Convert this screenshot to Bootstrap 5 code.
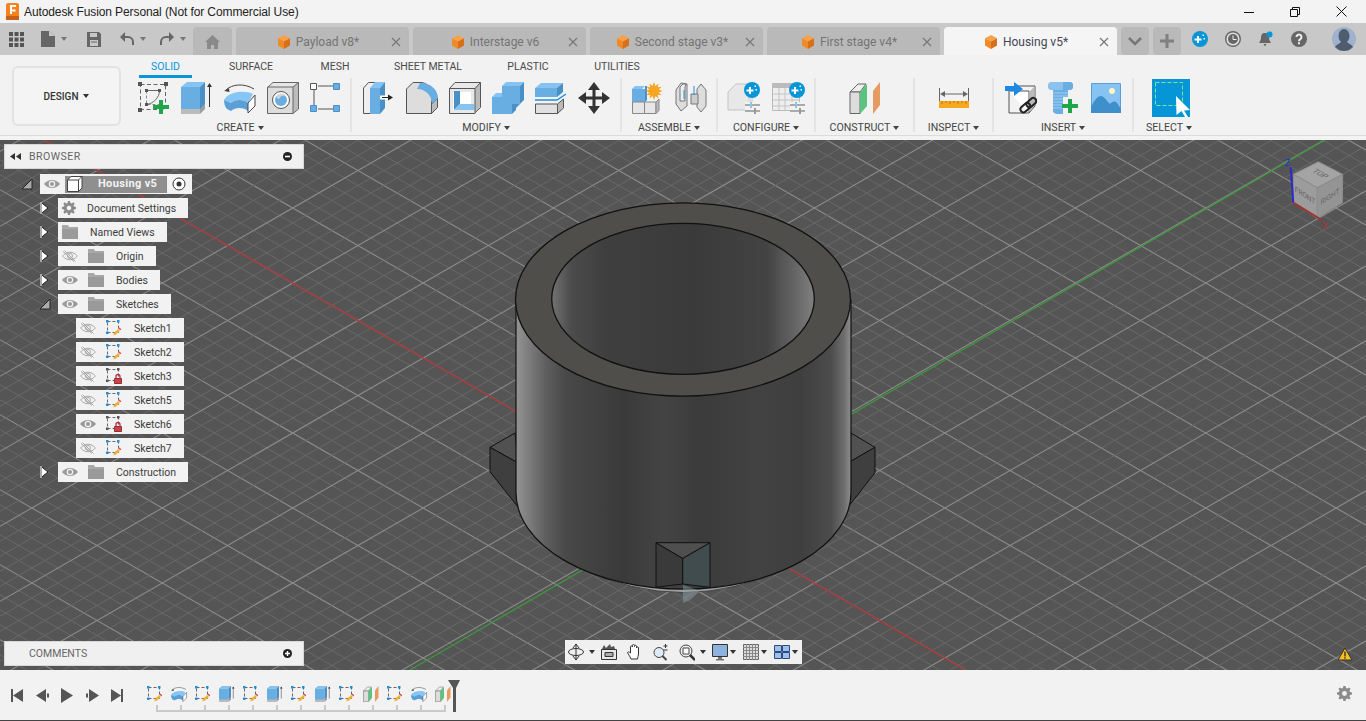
<!DOCTYPE html>
<html lang="en">
<head>
    <meta charset="UTF-8">
    <meta name="viewport" content="width=device-width, initial-scale=1.0">
    <title>Autodesk Fusion Personal</title>
    <link rel="stylesheet" href="https://cdn.jsdelivr.net/npm/bootstrap@5.3.0/dist/css/bootstrap.min.css">
    <style>
        html, body { height: 100%; overflow: hidden; }
        body { background: #f3f3f3; font-family: Roboto, "Liberation Sans", sans-serif; color: #444; }
        svg { display: block; flex: none; }

        .title-bar { height: 23px; background: #f3f3f3; font-size: 12px; color: #222; padding-left: 6px; }
        .title-name { margin-left: 5px; font-family: "Liberation Sans", sans-serif; letter-spacing: -.1px; }
        .win-btns { margin-left: auto; margin-right: 2px; }
        .win-btn { width: 46px; justify-content: center; }

        .doc-bar { height: 32px; background: #c8c8c8; padding-left: 9px; }
        .qa-wrap { width: 175px; color: #777; }
        .qa-file { margin-left: 17px; }
        .qa-save { margin-left: 20px; }
        .qa-undo { margin-left: 19px; }
        .qa-redo { margin-left: 14px; }
        .qa-wrap .tri { margin-left: 6px; }
        .doc-tabs { gap: 4px; height: 28px; margin-top: 4px; margin-left: 9px; align-self: flex-start; }
        .doc-tab { width: 173px; height: 28px; background: #b9b9b9; border-radius: 4px 4px 0 0; font-size: 12px; color: #747474; padding: 1px 8px 0; }
        .doc-tab.on { background: #f5f5f5; color: #454555; }
        .tab-main { flex: 1 1 auto; gap: 4px; justify-content: center; }
        .home-tab, .bar-btn { height: 28px; background: #b9b9b9; border-radius: 4px 4px 0 0; }
        .home-tab { width: 39px; }
        .bar-btn { width: 28px; border-radius: 4px; }
        .bar-icons { gap: 17px; margin-left: 11px; }

        .ribbon { height: 81px; background: #f2f2f2; border-bottom: 1px solid #dcdcdc; margin-bottom: 4px; }
        .design-btn { width: 109px; height: 60px; margin: 11px 9px 0 12px; border: 2px solid #e2e2e2; border-radius: 6px; background: #f4f4f4; font-size: 10px; font-weight: 500; color: #333; gap: 5px; padding: 0; }
        .rb-tabs { height: 23px; margin-left: 9px; }
        .rb-tabs .nav-item { text-align: center; }
        .rb-tabs .nav-item:nth-child(1) { width: 53px; }
        .rb-tabs .nav-item:nth-child(2) { width: 118px; }
        .rb-tabs .nav-item:nth-child(3) { width: 50px; }
        .rb-tabs .nav-item:nth-child(4) { width: 136px; }
        .rb-tabs .nav-item:nth-child(5) { width: 64px; }
        .rb-tabs .nav-item:nth-child(6) { width: 114px; }
        .rb-tabs .nav-link { padding: 6px 0 0; height: 23px; font-size: 10.5px; color: #4a4a4a; border-bottom: 3px solid transparent; line-height: 12px; white-space: nowrap; }
        .rb-tabs .nav-link.active { color: #0696d7; border-bottom-color: #0696d7; }
        .rb-groups { height: 58px; }
        .rb-grp { border-right: 2px solid #e4e4e4; height: 54px; }
        .rb-grp:last-child { border-right: 0; }
        .rb-icons { gap: 11px; height: 38px; padding-top: 2px; flex: none; }
        .rb-label { font-size: 10.6px; color: #444; gap: 3px; margin-top: 5px; height: 13px; flex: none; }
        .g-create { width: 222px; }
        .g-modify { width: 270px; }
        .g-assemble { width: 96px; }
        .g-config { width: 98px; }
        .g-construct { width: 99px; }
        .g-inspect { width: 79px; }
        .g-insert { width: 140px; }
        .g-select { width: 70px; }
        .sel-ico { margin-left: 4px; }
        .tri { display: inline-block; width: 0; height: 0; border-left: 3px solid transparent; border-right: 3px solid transparent; border-top: 4px solid currentColor; flex: none; }

        .viewport { flex: 1 1 auto; background: #555; overflow: hidden; min-height: 0; }
        .scene { position: absolute; left: 0; top: 0; }
        .side-col { position: absolute; left: 4px; top: 4px; bottom: 4px; width: 300px; }
        .pane-head { height: 25px; background: #f0f0f0; border: 1px solid #d8d8d8; font-size: 10.5px; color: #666; padding: 0 11px 0 5px; }
        .pane-title { margin-left: 8px; letter-spacing: .5px; }
        .pane-plain { margin-left: 19px; }
        .tree { margin: 5px 0 0; padding: 0; list-style: none; font-size: 10.5px; color: #3c3c3c; }
        .tree li { display: flex; align-items: center; height: 20px; margin-bottom: 4px; padding-left: 35px; }
        .tree li.root { padding-left: 17px; }
        .tree li.sub { padding-left: 72px; }
        .exp { width: 14px; margin-right: 5px; }
        .tr-row { height: 20px; background: #f2f2f2; padding: 0 12px 0 4px; gap: 10px; white-space: nowrap; }
        .tr-name { margin-left: 2px; padding-top: 1px; }
        .tr-name.wide { margin-left: 1px; }
        .root .tr-row { padding: 0 6px 0 4px; gap: 5px; }
        .root-box { background: #8f8f8f; color: #f4f4f4; font-size: 11px; font-weight: 700; letter-spacing: .35px; height: 17px; width: 102px; padding-left: 2px; }
        .root-box span { margin-left: 15px; padding-top: 1px; }

        .nav-tools { position: absolute; left: 565px; bottom: 6px; height: 24px; width: 237px; background: #f0f0f0; padding-left: 3px; color: #333; }
        .nt-item { gap: 5px; margin-right: 6px; }
        .nt-plain { margin-right: 10px; }
        .nt-tight { gap: 2px; margin-right: 7px; }
        .warn-mark { position: absolute; right: 13px; bottom: 9px; }

        .timeline { height: 51px; background: #f2f2f2; border-bottom: 1px solid #444; padding-left: 11px; position: relative; }
        .tl-btns { gap: 12.5px; margin-right: 24px; }
        .tl-items { gap: 8px; height: 16px; }
        .tl-stack { margin-top: 7px; }
        .tl-ruler { margin-top: 3px; margin-left: 9px; }
        .playhead { position: absolute; left: 448px; top: 10px; }
        .tl-gear { position: absolute; right: 14px; top: 16px; }
    </style>
</head>
<body class="d-flex flex-column">

    <!-- shared icons -->
    <svg width="0" height="0" class="position-absolute">
        <defs>
            <symbol id="i-cube" viewBox="0 0 16 16">
                <path fill="#f7a24a" d="M8 1l6 3.2L8 7.4 2 4.2z"/>
                <path fill="#f08a24" d="M2 4.2l6 3.2V15l-6-3.4z"/>
                <path fill="#d8701a" d="M14 4.2L8 7.4V15l6-3.4z"/>
            </symbol>
            <symbol id="i-x" viewBox="0 0 10 10">
                <path stroke="#777" stroke-width="1.200" d="M1 1l8 8M9 1l-8 8"/>
            </symbol>
            <symbol id="i-eye" viewBox="0 0 16 12">
                <path fill="#9a9a9a" d="M0 6c4-5.4 12-5.4 16 0-4 5.400-12 5.400-16 0z"/>
                <circle cx="8" cy="6" r="3.300" fill="#f2f2f2"/>
                <circle cx="8" cy="6" r="2" fill="#9a9a9a"/>
            </symbol>
            <symbol id="i-eye-off" viewBox="0 0 16 12">
                <path fill="none" stroke="#a8a8a8" d="M.6 6c4-5 10.800-5 14.800 0-4 5-10.800 5-14.800 0z"/>
                <circle cx="8" cy="6" r="2.500" fill="none" stroke="#a8a8a8"/>
                <path stroke="#a8a8a8" d="M2.500 .5l11 11M1 1.500l11 10"/>
            </symbol>
            <symbol id="i-folder" viewBox="0 0 16 14">
                <path fill="#a8a8a8" d="M0 0h6l1 2h9v2H0z"/>
                <path fill="#9a9a9a" d="M0 4h16v10H0z"/>
            </symbol>
            <symbol id="i-gear" viewBox="0 0 14 14">
                <path fill="#8b8b8b" d="M6 0h2l.4 1.900 1.300.5L11.300 1.300l1.400 1.400-1.100 1.600.5 1.300 1.900.4v2l-1.900.4-.5 1.300 1.100 1.600-1.400 1.400-1.600-1.100-1.300.5L8 14H6l-.4-1.900-1.300-.5-1.600 1.100-1.400-1.400 1.100-1.600-.5-1.300L0 8V6l1.900-.4.500-1.300L1.300 2.700l1.400-1.400 1.600 1.100 1.300-.5z"/>
                <circle cx="7" cy="7" r="2.300" fill="#f2f2f2"/>
            </symbol>
            <symbol id="i-sk-edit" viewBox="0 0 16 16">
                <path fill="none" stroke="#666" stroke-dasharray="3 2" d="M1.500 1.500h11v11h-11z"/>
                <path fill="#1e90e0" d="M0 0h2.500v2.500H0zM11 0h2.500v2.500H11zM0 11.500h2.500V14H0z"/>
                <path fill="#f2b233" d="M8 13l4-4 1.800 1.800-4 4-2.500.8z"/>
                <path fill="#ee4444" d="M12.500 8.500l1-1 1.800 1.800-1 1z"/>
            </symbol>
            <symbol id="i-sk-lock" viewBox="0 0 16 16">
                <path fill="none" stroke="#666" stroke-dasharray="3 2" d="M1.500 1.500h11v11h-11z"/>
                <path fill="#555" d="M0 0h2.500v2.500H0zM11 0h2.500v2.500H11zM0 11.500h2.500V14H0z"/>
                <path fill="none" stroke="#b4343c" stroke-width="1.300" d="M10 10V8.500a2 2 0 0 1 4 0V10"/>
                <path fill="#c9444c" stroke="#9c2b33" d="M8.500 10.500h7v5h-7z"/>
            </symbol>
            <symbol id="i-new-sketch" viewBox="0 0 32 32">
                <path fill="none" stroke="#666" stroke-dasharray="4 2.500" d="M2.500 2.500h25v25h-25z"/>
                <path fill="#555" d="M0 0h4v4H0zM26 0h4v4h-4zM0 26h4v4H0z"/>
                <path fill="none" stroke="#888" stroke-dasharray="3 2" d="M8.500 8.500v14h14"/>
                <path fill="none" stroke="#666" d="M8.500 22.500c7-1 13-7 13-14h-13"/>
                <path fill="#555" d="M7 7h3v3H7zM20 7h3v3h-3zM7 21h3v3H7z"/>
                <path fill="#1fa64a" d="M21 18h4v5h6v4h-6v5h-4v-5h-6v-4h6z"/>
            </symbol>
            <symbol id="i-extrude" viewBox="0 0 32 32">
                <path fill="#bbb" d="M0 26h19v6H0z"/>
                <path fill="#9e9e9e" d="M19 26l5-4v5l-5 5z"/>
                <path fill="#86c3f2" d="M0 5l6-5h18l-5 5z"/>
                <path fill="#68aee3" d="M0 5h19v22H0z"/>
                <path fill="#4a8fc6" d="M19 5l5-5v22l-5 5z"/>
                <path stroke="#333" d="M28.500 3v22"/>
                <path fill="#333" d="M28.500 1l2.500 4h-5z"/>
            </symbol>
            <symbol id="i-revolve" viewBox="0 0 32 32">
                <path fill="none" stroke="#444" d="M2 8C8 2 20 1 30 7"/>
                <path fill="#444" d="M0 9l5-3 .5 4z"/>
                <path fill="#86c6f6" d="M0 18C5 9 21 8 29 12l-5 9C20 17 11 17 7 21z"/>
                <path fill="#5a9fd6" d="M0 18l7 3c4-4 13-4 17 0v8c-4-4-13-4-17 0l-4-2C1 25 0 21 0 18z"/>
                <path fill="#fff" stroke="#444" d="M24 21l7-8v11l-7 7z"/>
            </symbol>
            <symbol id="i-hole" viewBox="0 0 32 32">
                <path fill="#e6e6e6" d="M1 5l5-4h25l-5 4z"/>
                <path fill="#ddd" d="M1 5h25v26H1z"/>
                <path fill="#bbb" d="M26 5l5-4v26l-5 4z"/>
                <path fill="none" stroke="#666" d="M1 5l5-4.500h25.500V27l-5.500 4.500H.5V5h25.500v26.500M26 5l5.500-4.500"/>
                <circle cx="14" cy="18" r="8.500" fill="#fff" stroke="#555"/>
                <circle cx="14" cy="18" r="6" fill="#68aee3"/>
                <path fill="#d4d4d4" d="M10 13a6 6 0 0 1 9 1c-3-1-6 0-7 3-2 0-3-2-2-4z"/>
            </symbol>
            <symbol id="i-form" viewBox="0 0 32 32">
                <path stroke="#555" d="M4 8v16M8 4h16M8 27h16" fill="none"/>
                <path fill="#fff" stroke="#555" d="M.5 1.500h6v6h-6z"/>
                <path fill="#68aee3" stroke="#4a8fc6" d="M23.500 1.500h6v6h-6zM.5 23.500h6v6h-6zM23.500 23.500h6v6h-6z"/>
            </symbol>
            <symbol id="i-press" viewBox="0 0 32 32">
                <path fill="#eee" stroke="#555" d="M.5 31.500V6l5-5.500h6V31.500z"/>
                <path fill="#86c3f2" d="M7 6l5-6h10l-5 6z"/>
                <path fill="#68aee3" d="M7 6h10v26H7z"/>
                <path fill="#4a8fc6" d="M17 6l5-6v26l-5 6z"/>
                <path fill="#fff" d="M17 13.500h8v4h-8z"/>
                <path stroke="#222" d="M19 15.500h7"/>
                <path fill="#222" d="M30 15.500l-5 3v-6z"/>
            </symbol>
            <symbol id="i-fillet" viewBox="0 0 32 32">
                <path fill="#ddd" stroke="#555" d="M.5 31.500V7L7 .5h8C22 .5 29 9 25.500 21L25.500 31.500z"/>
                <path fill="#bbb" stroke="#555" d="M25.500 31.500v-9l6-6.500v9.500z"/>
                <path fill="#68aee3" d="M14 1c9-1 18 6 18 15l-6 6c0-8-6-15-15-15z"/>
            </symbol>
            <symbol id="i-shell" viewBox="0 0 32 32">
                <path fill="#e8e8e8" stroke="#555" d="M.5 6.500L6 .5h25.500v25l-6 6H.5z"/>
                <path fill="#bbb" d="M26 6l5-5v24l-5 6z"/>
                <path fill="#fff" d="M4 10h18v18H4z"/>
                <path fill="none" stroke="#555" d="M.5 6.500h25.500v25M26 6.500L31.500 .5"/>
                <path fill="#4a8fc6" d="M5 9h6v13l-6 6z"/>
                <path fill="#86c3f2" d="M11 22h14v6H5z"/>
            </symbol>
            <symbol id="i-combine" viewBox="0 0 32 32">
                <path fill="#86c3f2" d="M10 4l4-4h18l-4 4zM0 15l4-4h8l-2 4z"/>
                <path fill="#68aee3" d="M10 4h18v18H20v10H0V15h10z"/>
                <path fill="#4a8fc6" d="M28 4l4-4v18l-4 4zM20 22h8l-4 4-0 2-4 4z"/>
            </symbol>
            <symbol id="i-split" viewBox="0 0 32 32">
                <path fill="#86c3f2" d="M0 6l6-5h22l-6 5z"/>
                <path fill="#68aee3" d="M0 6h22v9H0z"/>
                <path fill="#4a8fc6" d="M22 6l6-5v9l-6 5z"/>
                <path fill="none" stroke="#1e90e0" stroke-width="1.500" d="M0 18h22l9-6"/>
                <path fill="#e0e0e0" stroke="#555" d="M.5 22h22v9.500H.5z"/>
                <path fill="#bbb" stroke="#555" d="M22.500 22l6-5v9l-6 5.500z"/>
            </symbol>
            <symbol id="i-move" viewBox="0 0 32 32">
                <path fill="#333" d="M16 0l6 8h-4.500v6.500H24V10l8 6-8 6v-4.500h-6.500V24H22l-6 8-6-8h4.500v-6.500H8V22l-8-6 8-6v4.500h6.500V8H10z"/>
            </symbol>
            <symbol id="i-assemble" viewBox="0 0 32 32">
                <path fill="#86c3f2" d="M0 7l3-3h10l-3 3z"/>
                <path fill="#68aee3" d="M0 7h13v13H0z"/>
                <path fill="#4a8fc6" d="M13 4h2v14l-2 2z"/>
                <path fill="#e6e6e6" stroke="#888" d="M.5 20h12v11.500H.5zM12.500 20h11.500v11.500H12.500z"/>
                <path fill="#bbb" stroke="#888" d="M24 20l3-3v11.500L24 31.500z"/>
                <path fill="#f6a623" d="M22 0l1.500 4 3-2.500-.8 3.800 4-.5-3 2.700 3.800 1.500-3.800 1.500 3 2.700-4-.5.800 3.800-3-2.500L22 18l-1.500-4-3 2.500.8-3.800-4 .5 3-2.700-3.800-1.500 3.800-1.500-3-2.700 4 .5-.8-3.800 3 2.500z"/>
            </symbol>
            <symbol id="i-joint" viewBox="0 0 32 32">
                <path fill="#ddd" stroke="#777" d="M1 8l5-7 6 1v22l-6 5-5-7z"/>
                <path fill="#eee" stroke="#777" d="M5 5l3-3h3l-1 3v14H5z"/>
                <path fill="#ddd" stroke="#777" d="M31 8l-5-6-4 5v18l4 5 5-6z"/>
                <path fill="#ccc" stroke="#777" d="M16 12h7v10h-7z"/>
                <path stroke="#1e90e0" d="M19 4v9M9 8v9"/>
            </symbol>
            <symbol id="i-spark" viewBox="0 0 16 16">
                <circle cx="8" cy="8" r="8" fill="#0696d7"/>
                <path fill="#fff" d="M5 5h2v2.500h2.500v2H7V12H5V9.500H2.500v-2H5z"/>
                <path fill="#fff" d="M10.500 3.500h1.500V5h-1.500zM11.500 7h1.500v1.500h-1.500z"/>
            </symbol>
            <symbol id="i-config" viewBox="0 0 34 32">
                <path fill="#e8e8e8" stroke="#c4c4c4" d="M1 10l8-8h16v20l-4 6H1z"/>
                <path fill="#ddd" d="M21 10l5-8v20l-5 6z"/>
                <use href="#i-spark" x="17" y="0" width="16" height="16"/>
                <path fill="#f2f2f2" d="M18 20h16v12H18z"/>
                <path stroke="#aaa" stroke-width="2" d="M18 23h15M18 29h15"/>
                <path stroke="#8fc4ea" stroke-width="2" d="M24 20v6"/>
                <path stroke="#999" stroke-width="2" d="M28 26v6"/>
            </symbol>
            <symbol id="i-config2" viewBox="0 0 34 32">
                <path fill="#eee" stroke="#bbb" d="M.5 1.500h27v27H.5z"/>
                <path fill="#bbb" d="M0 1h28v5H0z"/>
                <path stroke="#c4c4c4" fill="none" d="M1 12h26M1 18h26M1 24h26M7 6v22M13 6v22M20 6v22"/>
                <use href="#i-spark" x="17" y="0" width="16" height="16"/>
                <path fill="#f2f2f2" d="M18 20h16v12H18z"/>
                <path stroke="#aaa" stroke-width="2" d="M18 23h15M18 29h15"/>
                <path stroke="#8fc4ea" stroke-width="2" d="M24 20v6"/>
                <path stroke="#999" stroke-width="2" d="M28 26v6"/>
            </symbol>
            <symbol id="i-construct" viewBox="0 0 32 32">
                <path fill="#eee" stroke="#666" d="M1 10l8-8h8L11 10z"/>
                <path fill="#ddd" stroke="#666" d="M1 10h10v21.500H1z"/>
                <path fill="#5cc27f" d="M11 10l7-8v22l-7 8z"/>
                <path fill="#e59a62" d="M24 9l7-9v23l-7 9z"/>
            </symbol>
            <symbol id="i-inspect" viewBox="0 0 30 22">
                <path fill="none" stroke="#666" d="M.5 1v15M29.500 1v15M3 7h24"/>
                <path fill="#666" d="M1 7l5-3v6zM29 7l-5-3v6z"/>
                <path fill="#f6a91f" d="M0 14h30v7H0z"/>
                <path stroke="#b97a0a" d="M3 14v3M7 14v2M11 14v3M15 14v2M19 14v3M23 14v2M27 14v3"/>
            </symbol>
            <symbol id="i-derive" viewBox="0 0 32 32">
                <path fill="#f2f2f2" stroke="#555" d="M4 9l6-5h20v20l-6 7H4z"/>
                <path fill="#fff" stroke="#555" d="M4 9h20v22"/>
                <path fill="#bbb" d="M24.500 9.500l5-5v19l-5 6z"/>
                <path fill="#1e88e5" d="M0 4h9V0l9 7-9 7V9H0z"/>
                <g fill="none" stroke="#222" stroke-width="2">
                    <rect x="15" y="23" width="11" height="6" rx="3" transform="rotate(-42 20 26)"/>
                    <rect x="21" y="18" width="11" height="6" rx="3" transform="rotate(-42 26 21)"/>
                </g>
            </symbol>
            <symbol id="i-bolt" viewBox="0 0 32 32">
                <path fill="#8cc2ee" d="M0 2l2-2h21l2 2v4l-2 2H2L0 6z"/>
                <path fill="#6aaee3" d="M15 0h8l2 2v4l-2 2h-8z"/>
                <path fill="#6aaee3" d="M5 8h15v22l-3 2H8l-3-2z"/>
                <path stroke="#a6d0f0" d="M5 11h15M5 14h15M5 17h15M5 20h15M5 23h15M5 26h15"/>
                <path fill="#f2f2f2" d="M15 15h17v17H15z"/>
                <path fill="#1fa64a" d="M20 17h4v5h6v4h-6v5h-4v-5h-6v-4h6z"/>
            </symbol>
            <symbol id="i-canvas" viewBox="0 0 30 30">
                <path fill="#86c3f2" stroke="#5a9fd6" d="M.5 .5h29v29H.5z"/>
                <circle cx="21" cy="8" r="3" fill="#fdf6c3"/>
                <path fill="#3f8fcb" d="M0 24c4-8 7-11 10-11s5 4 9 8c3-3 5-3 7-1l4 6v4H0z"/>
            </symbol>
            <symbol id="i-select" viewBox="0 0 38 38">
                <path fill="#0696d7" d="M0 0h38v38H0z"/>
                <path fill="none" stroke="#7fe39b" stroke-dasharray="4 2" d="M3.500 3.500h27v23h-27z"/>
                <path fill="#fff" d="M24 17l14 14-6 .5 4 6.500h-3l-3.500-6-5 4z"/>
            </symbol>
            <symbol id="i-exp" viewBox="0 0 10 14">
                <path fill="#fff" stroke="#222" d="M1.500 1v12L9 7z"/>
                <path fill="#aaa" d="M1 1h2v12H1z"/>
            </symbol>
            <symbol id="i-open" viewBox="0 0 12 12">
                <path fill="#aaa" stroke="#222" d="M11 1v10H1z"/>
            </symbol>
        </defs>
    </svg>

    <div class="title-bar d-flex align-items-center flex-shrink-0">
        <svg width="13" height="17" viewBox="0 0 13 17">
            <rect width="13" height="17" rx="2" fill="#f58220"/>
            <path fill="#fff" d="M4 2h6v2H6v2.500h3.500v2H6V11H4z"/>
            <rect y="13" width="13" height="4" fill="#c9601a"/>
        </svg>
        <span class="title-name">Autodesk Fusion Personal (Not for Commercial Use)</span>
        <div class="win-btns d-flex align-items-center">
            <span class="win-btn d-flex"><svg width="10" height="10" viewBox="0 0 10 10"><path stroke="#111" d="M0 5.500h10"/></svg></span>
            <span class="win-btn d-flex"><svg width="10" height="10" viewBox="0 0 10 10"><path fill="none" stroke="#111" d="M.5 2.500h7v7h-7zM2.500 2V.5h7v7H8"/></svg></span>
            <span class="win-btn d-flex"><svg width="11" height="11" viewBox="0 0 11 11"><path stroke="#111" d="M.5 .5l10 10M10.500 .5l-10 10"/></svg></span>
        </div>
    </div>

    <div class="doc-bar d-flex align-items-center flex-shrink-0">
        <div class="qa-wrap d-flex align-items-center">
            <svg width="15" height="15" viewBox="0 0 15 15" fill="#555"><path d="M0 0h4v4H0zM5.500 0h4v4h-4zM11 0h4v4h-4zM0 5.500h4v4H0zM5.500 5.500h4v4h-4zM11 5.500h4v4h-4zM0 11h4v4H0zM5.500 11h4v4h-4zM11 11h4v4h-4z"/></svg>
            <svg class="qa-file" width="14" height="16" viewBox="0 0 14 16"><path fill="#666" d="M0 0h8l6 5v11H0z"/><path fill="#c8c8c8" d="M8 0l6 5H8z"/></svg><i class="tri"></i>
            <svg class="qa-save" width="14" height="15" viewBox="0 0 14 15"><path fill="#666" d="M0 0h12l2 2v13H0z"/><path fill="#c8c8c8" d="M3 1h7v4H3zM3 8h8v6H3z"/><path fill="#666" d="M4 9.500h6v1H4z"/></svg>
            <svg class="qa-undo" width="14" height="14" viewBox="0 0 14 14"><path fill="none" stroke="#666" stroke-width="2" d="M3 5h5a5 5 0 0 1 5 5v3"/><path fill="#666" d="M5 0L0 5l5 5z"/></svg><i class="tri"></i>
            <svg class="qa-redo" width="14" height="14" viewBox="0 0 14 14"><path fill="none" stroke="#666" stroke-width="2" d="M11 5H6a5 5 0 0 0-5 5v3"/><path fill="#666" d="M9 0l5 5-5 5z"/></svg><i class="tri"></i>
        </div>
        <div class="doc-tabs d-flex">
            <div class="home-tab d-flex align-items-center justify-content-center"><svg width="15" height="15" viewBox="0 0 15 15"><path fill="#8a8a8a" d="M7.500 1L15 8h-2v7H9v-4H6v4H2V8H0z"/></svg></div>
            <div class="doc-tab d-flex align-items-center"><div class="tab-main d-flex align-items-center"><svg width="16" height="16"><use href="#i-cube"/></svg><span>Payload v8*</span></div><svg width="10" height="10"><use href="#i-x"/></svg></div>
            <div class="doc-tab d-flex align-items-center"><div class="tab-main d-flex align-items-center"><svg width="16" height="16"><use href="#i-cube"/></svg><span>Interstage v6</span></div><svg width="10" height="10"><use href="#i-x"/></svg></div>
            <div class="doc-tab d-flex align-items-center"><div class="tab-main d-flex align-items-center"><svg width="16" height="16"><use href="#i-cube"/></svg><span>Second stage v3*</span></div><svg width="10" height="10"><use href="#i-x"/></svg></div>
            <div class="doc-tab d-flex align-items-center"><div class="tab-main d-flex align-items-center"><svg width="16" height="16"><use href="#i-cube"/></svg><span>First stage v4*</span></div><svg width="10" height="10"><use href="#i-x"/></svg></div>
            <div class="doc-tab on d-flex align-items-center"><div class="tab-main d-flex align-items-center"><svg width="16" height="16"><use href="#i-cube"/></svg><span>Housing v5*</span></div><svg width="10" height="10"><use href="#i-x"/></svg></div>
            <div class="bar-btn d-flex align-items-center justify-content-center"><svg width="14" height="9" viewBox="0 0 14 9"><path fill="none" stroke="#777" stroke-width="2.500" d="M1 1l6 6 6-6"/></svg></div>
            <div class="bar-btn d-flex align-items-center justify-content-center"><svg width="14" height="14" viewBox="0 0 14 14"><path fill="#808080" d="M5.500 0h3v5.500H14v3H8.500V14h-3V8.500H0v-3h5.500z"/></svg></div>
        </div>
        <div class="bar-icons d-flex align-items-center">
            <svg width="16" height="16"><use href="#i-spark"/></svg>
            <svg width="16" height="16" viewBox="0 0 16 16"><circle cx="8" cy="8" r="7.300" fill="#e0e0e0" stroke="#666" stroke-width="1.400"/><circle cx="8" cy="8" r="5" fill="#666"/><path stroke="#eee" d="M8 4.500v4H11.500" fill="none"/></svg>
            <svg width="16" height="16" viewBox="0 0 16 16"><path fill="#666" d="M7 2c3 0 4 2 4 5 0 2 1 3 2 5H1c1-2 2-3 2-5 0-3 1-5 4-5zM5.500 13h3L7 15.500z"/><circle cx="11.500" cy="3.500" r="3" fill="#0696d7"/></svg>
            <svg width="16" height="16" viewBox="0 0 16 16"><circle cx="8" cy="8" r="8" fill="#666"/><path fill="none" stroke="#eee" stroke-width="2" d="M5.500 6a2.500 2.500 0 1 1 3.800 2.100C8.300 8.800 8 9.200 8 10.300"/><path fill="#eee" d="M7 11.300h2v2H7z"/></svg>
            <svg class="ms-2" width="24" height="24" viewBox="0 0 24 24"><defs><clipPath id="av"><circle cx="12" cy="12" r="12"/></clipPath></defs><circle cx="12" cy="12" r="12" fill="#9fb2cc"/><g clip-path="url(#av)" fill="#4f5d70"><ellipse cx="12" cy="9" rx="5.500" ry="7"/><path d="M2 24c0-6 5-7 7-9h6c2 2 7 3 7 9z"/></g></svg>
        </div>
    </div>

    <div class="ribbon d-flex flex-shrink-0">
        <button type="button" class="design-btn d-flex align-items-center justify-content-center"><span>DESIGN</span><i class="tri"></i></button>
        <div>
            <ul class="nav rb-tabs">
                <li class="nav-item"><a class="nav-link active" href="#">SOLID</a></li>
                <li class="nav-item"><a class="nav-link" href="#">SURFACE</a></li>
                <li class="nav-item"><a class="nav-link" href="#">MESH</a></li>
                <li class="nav-item"><a class="nav-link" href="#">SHEET METAL</a></li>
                <li class="nav-item"><a class="nav-link" href="#">PLASTIC</a></li>
                <li class="nav-item"><a class="nav-link" href="#">UTILITIES</a></li>
            </ul>
            <div class="rb-groups d-flex">
                <div class="rb-grp g-create d-flex flex-column align-items-center">
                    <div class="rb-icons d-flex align-items-center">
                        <svg width="32" height="32"><use href="#i-new-sketch"/></svg>
                        <svg width="32" height="32"><use href="#i-extrude"/></svg>
                        <svg width="32" height="32"><use href="#i-revolve"/></svg>
                        <svg width="32" height="32"><use href="#i-hole"/></svg>
                        <svg width="32" height="32"><use href="#i-form"/></svg>
                    </div>
                    <div class="rb-label d-flex align-items-center"><span>CREATE</span><i class="tri"></i></div>
                </div>
                <div class="rb-grp g-modify d-flex flex-column align-items-center">
                    <div class="rb-icons d-flex align-items-center">
                        <svg width="32" height="32"><use href="#i-press"/></svg>
                        <svg width="32" height="32"><use href="#i-fillet"/></svg>
                        <svg width="32" height="32"><use href="#i-shell"/></svg>
                        <svg width="32" height="32"><use href="#i-combine"/></svg>
                        <svg width="32" height="32"><use href="#i-split"/></svg>
                        <svg width="32" height="32"><use href="#i-move"/></svg>
                    </div>
                    <div class="rb-label d-flex align-items-center"><span>MODIFY</span><i class="tri"></i></div>
                </div>
                <div class="rb-grp g-assemble d-flex flex-column align-items-center">
                    <div class="rb-icons d-flex align-items-center">
                        <svg width="32" height="32"><use href="#i-assemble"/></svg>
                        <svg width="32" height="32"><use href="#i-joint"/></svg>
                    </div>
                    <div class="rb-label d-flex align-items-center"><span>ASSEMBLE</span><i class="tri"></i></div>
                </div>
                <div class="rb-grp g-config d-flex flex-column align-items-center">
                    <div class="rb-icons d-flex align-items-center">
                        <svg width="34" height="32"><use href="#i-config"/></svg>
                        <svg width="34" height="32"><use href="#i-config2"/></svg>
                    </div>
                    <div class="rb-label d-flex align-items-center"><span>CONFIGURE</span><i class="tri"></i></div>
                </div>
                <div class="rb-grp g-construct d-flex flex-column align-items-center">
                    <div class="rb-icons d-flex align-items-center">
                        <svg width="32" height="32"><use href="#i-construct"/></svg>
                    </div>
                    <div class="rb-label d-flex align-items-center"><span>CONSTRUCT</span><i class="tri"></i></div>
                </div>
                <div class="rb-grp g-inspect d-flex flex-column align-items-center">
                    <div class="rb-icons d-flex align-items-center">
                        <svg width="30" height="22"><use href="#i-inspect"/></svg>
                    </div>
                    <div class="rb-label d-flex align-items-center"><span>INSPECT</span><i class="tri"></i></div>
                </div>
                <div class="rb-grp g-insert d-flex flex-column align-items-center">
                    <div class="rb-icons d-flex align-items-center">
                        <svg width="32" height="32"><use href="#i-derive"/></svg>
                        <svg width="32" height="32"><use href="#i-bolt"/></svg>
                        <svg width="30" height="30"><use href="#i-canvas"/></svg>
                    </div>
                    <div class="rb-label d-flex align-items-center"><span>INSERT</span><i class="tri"></i></div>
                </div>
                <div class="rb-grp g-select d-flex flex-column align-items-center">
                    <div class="rb-icons d-flex align-items-center">
                        <svg class="sel-ico" width="38" height="38"><use href="#i-select"/></svg>
                    </div>
                    <div class="rb-label d-flex align-items-center"><span>SELECT</span><i class="tri"></i></div>
                </div>
            </div>
        </div>
    </div>

    <div class="viewport position-relative">
        <svg class="scene" id="scene" width="1366" height="530" viewBox="0 140 1366 530">
            <defs>
                <linearGradient id="wall" gradientUnits="userSpaceOnUse" x1="516" y1="0" x2="851" y2="0">
                    <stop offset="0" stop-color="#949494"/>
                    <stop offset=".04" stop-color="#7c7c7c"/>
                    <stop offset=".09" stop-color="#5e5e5e"/>
                    <stop offset=".15" stop-color="#484848"/>
                    <stop offset=".25" stop-color="#404040"/>
                    <stop offset=".32" stop-color="#3a3a3a"/>
                    <stop offset=".44" stop-color="#444"/>
                    <stop offset=".55" stop-color="#3b3b3b"/>
                    <stop offset=".72" stop-color="#424242"/>
                    <stop offset=".85" stop-color="#3f3f3f"/>
                    <stop offset=".94" stop-color="#4c4c4c"/>
                    <stop offset=".98" stop-color="#6e6e6e"/>
                    <stop offset="1" stop-color="#8e8e8e"/>
                </linearGradient>
                <linearGradient id="bore" gradientUnits="userSpaceOnUse" x1="552" y1="0" x2="814" y2="0">
                    <stop offset="0" stop-color="#727272"/>
                    <stop offset=".07" stop-color="#4c4c4c"/>
                    <stop offset=".2" stop-color="#3f3f3f"/>
                    <stop offset=".55" stop-color="#3a3a3a"/>
                    <stop offset=".82" stop-color="#434343"/>
                    <stop offset=".93" stop-color="#666"/>
                    <stop offset="1" stop-color="#808080"/>
                </linearGradient>
            </defs>
            <g id="grid"></g>
            <path stroke="#ab3434" stroke-width="1.300" d="M43 139.400L1000 690"/>
            <path stroke="#3c983c" stroke-width="1.300" d="M1325 140L410 670"/>

            <!-- model -->
            <g stroke="#111" stroke-linejoin="round">
                <path fill="#9f9f9f" stroke="#333" stroke-width=".8" d="M580 568Q683 617 787 568z"/>
                <path fill="#515151" d="M490 447.300L515 433L518 463z"/>
                <path fill="#3f3f3f" d="M490 447.300L518 463V507L490 471.700z"/>
                <path fill="#515151" d="M875 447.300L851 433L848.300 462.700z"/>
                <path fill="#3f3f3f" d="M875 447.300L848.300 462.700V506.700L875 472.700z"/>
                <path fill="url(#wall)" stroke-width="1.200" d="M516 300V492.500A167.500 96.700 0 0 0 851 492.500V300z"/>
                <ellipse cx="683" cy="299.500" rx="167.500" ry="96.700" fill="#4f4e4b" stroke-width="1.300"/>
                <ellipse cx="683" cy="298.800" rx="131.300" ry="75.500" fill="url(#bore)" stroke-width="1.300"/>
                <path fill="#3a3a3a" d="M656 542.700L682.700 558.300V584L656 587.300z"/>
                <path fill="#414c4f" d="M710 542.700L682.700 558.300V584L710 587.300z"/>
                <path fill="#4f4f4f" d="M656 542.700H710L682.700 558.300z"/>
                <path fill="#8ea4b0" fill-opacity=".45" stroke="none" d="M683 585L700 591L690 600L683 603z"/>
            </g>

            <!-- view cube -->
            <path fill="#a4a4a4" stroke="#8c8c8c" d="M1318.300 161.700L1342.700 174.300L1317.300 187.700L1293.300 174.300z"/>
            <path fill="#9c9c9c" stroke="#8c8c8c" d="M1293.300 174.300L1317.300 187.700V218.300L1293.300 202.700z"/>
            <path fill="#949494" stroke="#8c8c8c" d="M1342.700 174.300L1317.300 187.700V218.300L1342.300 202.700z"/>
            <text font-family="Roboto, sans-serif" font-size="8" fill="#666" text-anchor="middle" transform="matrix(.86 .5 -.86 .5 1318 175)">TOP</text>
            <text font-family="Roboto, sans-serif" font-size="7.500" fill="#666" text-anchor="middle" transform="matrix(.86 .55 0 1 1305 198)">FRONT</text>
            <text font-family="Roboto, sans-serif" font-size="7.500" fill="#666" text-anchor="middle" transform="matrix(.86 -.55 0 1 1330 199)">RIGHT</text>
            <path stroke="#2a2ad0" stroke-width="2" d="M1290.700 167L1293.300 202.700"/>
            <path stroke="#a33030" stroke-width="2" d="M1293.300 202.700L1321.700 220"/>
            <text x="1285" y="166" font-family="Roboto, sans-serif" font-size="9" fill="#2a2ad0">Z</text>
            <text x="1322" y="229" font-family="Roboto, sans-serif" font-size="9" fill="#b03030">X</text>
        </svg>

        <div class="side-col d-flex flex-column justify-content-between">
            <div>
                <div class="pane-head d-flex align-items-center">
                    <svg width="11" height="7" viewBox="0 0 11 7"><path fill="#333" d="M5 0v7L0 3.500zM11 0v7L6 3.500z"/></svg>
                    <span class="pane-title">BROWSER</span>
                    <svg class="ms-auto" width="9" height="9" viewBox="0 0 9 9"><circle cx="4.500" cy="4.500" r="4.500" fill="#222"/><path fill="#fff" d="M2 3.700h5v1.600H2z"/></svg>
                </div>
                <ul class="tree">
                    <li class="root">
                        <span class="exp d-flex"><svg width="12" height="12"><use href="#i-open"/></svg></span>
                        <div class="tr-row d-flex align-items-center">
                            <svg width="16" height="12"><use href="#i-eye"/></svg>
                            <div class="root-box d-flex align-items-center">
                                <svg width="16" height="16" viewBox="0 0 16 16"><path fill="#fff" stroke="#444" d="M.5 4L4 .5h11V12l-3.500 3.500H.5z"/><path fill="none" stroke="#444" d="M.5 4h11v11.500M11.500 4L15 .5"/></svg>
                                <span>Housing v5</span>
                            </div>
                            <svg width="14" height="14" viewBox="0 0 14 14"><circle cx="7" cy="7" r="6" fill="#fff" stroke="#333"/><circle cx="7" cy="7" r="2.500" fill="#333"/></svg>
                        </div>
                    </li>
                    <li>
                        <span class="exp d-flex"><svg width="10" height="14"><use href="#i-exp"/></svg></span>
                        <div class="tr-row d-flex align-items-center"><svg width="14" height="14"><use href="#i-gear"/></svg><span class="tr-name wide">Document Settings</span></div>
                    </li>
                    <li>
                        <span class="exp d-flex"><svg width="10" height="14"><use href="#i-exp"/></svg></span>
                        <div class="tr-row d-flex align-items-center"><svg width="16" height="14"><use href="#i-folder"/></svg><span class="tr-name">Named Views</span></div>
                    </li>
                    <li>
                        <span class="exp d-flex"><svg width="10" height="14"><use href="#i-exp"/></svg></span>
                        <div class="tr-row d-flex align-items-center"><svg width="16" height="12"><use href="#i-eye-off"/></svg><svg width="16" height="14"><use href="#i-folder"/></svg><span class="tr-name">Origin</span></div>
                    </li>
                    <li>
                        <span class="exp d-flex"><svg width="10" height="14"><use href="#i-exp"/></svg></span>
                        <div class="tr-row d-flex align-items-center"><svg width="16" height="12"><use href="#i-eye"/></svg><svg width="16" height="14"><use href="#i-folder"/></svg><span class="tr-name">Bodies</span></div>
                    </li>
                    <li>
                        <span class="exp d-flex"><svg width="12" height="12"><use href="#i-open"/></svg></span>
                        <div class="tr-row d-flex align-items-center"><svg width="16" height="12"><use href="#i-eye"/></svg><svg width="16" height="14"><use href="#i-folder"/></svg><span class="tr-name">Sketches</span></div>
                    </li>
                    <li class="sub"><div class="tr-row d-flex align-items-center"><svg width="16" height="12"><use href="#i-eye-off"/></svg><svg width="16" height="16"><use href="#i-sk-edit"/></svg><span class="tr-name">Sketch1</span></div></li>
                    <li class="sub"><div class="tr-row d-flex align-items-center"><svg width="16" height="12"><use href="#i-eye-off"/></svg><svg width="16" height="16"><use href="#i-sk-edit"/></svg><span class="tr-name">Sketch2</span></div></li>
                    <li class="sub"><div class="tr-row d-flex align-items-center"><svg width="16" height="12"><use href="#i-eye-off"/></svg><svg width="16" height="16"><use href="#i-sk-lock"/></svg><span class="tr-name">Sketch3</span></div></li>
                    <li class="sub"><div class="tr-row d-flex align-items-center"><svg width="16" height="12"><use href="#i-eye-off"/></svg><svg width="16" height="16"><use href="#i-sk-edit"/></svg><span class="tr-name">Sketch5</span></div></li>
                    <li class="sub"><div class="tr-row d-flex align-items-center"><svg width="16" height="12"><use href="#i-eye"/></svg><svg width="16" height="16"><use href="#i-sk-lock"/></svg><span class="tr-name">Sketch6</span></div></li>
                    <li class="sub"><div class="tr-row d-flex align-items-center"><svg width="16" height="12"><use href="#i-eye-off"/></svg><svg width="16" height="16"><use href="#i-sk-edit"/></svg><span class="tr-name">Sketch7</span></div></li>
                    <li>
                        <span class="exp d-flex"><svg width="10" height="14"><use href="#i-exp"/></svg></span>
                        <div class="tr-row d-flex align-items-center"><svg width="16" height="12"><use href="#i-eye"/></svg><svg width="16" height="14"><use href="#i-folder"/></svg><span class="tr-name">Construction</span></div>
                    </li>
                </ul>
            </div>
            <div class="pane-head d-flex align-items-center">
                <span class="pane-plain">COMMENTS</span>
                <svg class="ms-auto" width="9" height="9" viewBox="0 0 9 9"><circle cx="4.500" cy="4.500" r="4.500" fill="#222"/><path fill="#fff" d="M3.800 2h1.400v1.800H7v1.400H5.200V7H3.800V5.200H2V3.800h1.800z"/></svg>
            </div>
        </div>

        <div class="nav-tools d-flex align-items-center">
            <span class="nt-item d-flex align-items-center"><svg width="16" height="18" viewBox="0 0 16 18"><path fill="none" stroke="#333" d="M8 1v16M5 5l3-4 3 4M5 13l3 4 3-4"/><ellipse cx="8" cy="9" rx="7.500" ry="3.500" fill="none" stroke="#333"/></svg><i class="tri"></i></span>
            <span class="nt-item nt-plain d-flex"><svg width="16" height="16" viewBox="0 0 16 16"><path fill="#e8e8e8" stroke="#333" d="M.5 5.500h15v10H.5z"/><path fill="#aaa" stroke="#333" d="M4 8.500h8v4H4z"/><path fill="#555" d="M1 5l2-4 2 3 4-4 1 3 3-1 1 3z"/></svg></span>
            <span class="nt-item nt-plain d-flex"><svg width="16" height="16" viewBox="0 0 16 16"><path fill="#fff" stroke="#333" stroke-linejoin="round" d="M4 15C3 12 1 10 .5 8.500c.5-1 2-.5 3 .5V3c0-1.500 2-1.500 2 0V1.500c0-1.500 2-1.500 2 0V2.500c0-1.500 2-1.500 2 0V4c0-1.500 2-1.500 2 0v6c0 2-1 3-1 5z"/></svg></span>
            <span class="nt-item nt-plain d-flex"><svg width="16" height="17" viewBox="0 0 16 17"><circle cx="6" cy="8.500" r="5" fill="#dcebf7" stroke="#444"/><path stroke="#444" stroke-width="2" d="M9.500 12l4 4"/><path stroke="#333" d="M12.500 0v4M10.500 2h4M10.500 6h4"/></svg></span>
            <span class="nt-item d-flex align-items-center"><svg width="16" height="17" viewBox="0 0 16 17"><circle cx="7" cy="7" r="6" fill="#eee" stroke="#444"/><path fill="#fff" stroke="#444" d="M4 4h6v6H4z"/><path stroke="#333" stroke-width="2.500" d="M11 11l5 5"/></svg><i class="tri"></i></span>
            <span class="nt-item nt-tight d-flex align-items-center"><svg width="16" height="17" viewBox="0 0 16 17"><path fill="#8fb2dd" stroke="#333" d="M.5 .5h15v12H.5z"/><path fill="#777" d="M6 13h4v2H6zM4 15h8v1.500H4z"/></svg><i class="tri"></i></span>
            <span class="nt-item nt-tight d-flex align-items-center"><svg width="16" height="16" viewBox="0 0 16 16"><path fill="#ddd" stroke="#666" d="M.5 .5h15v15H.5z"/><path stroke="#888" d="M3.500 0v16M6.500 0v16M9.500 0v16M12.500 0v16M0 3.500h16M0 6.500h16M0 9.500h16M0 12.500h16"/></svg><i class="tri"></i></span>
            <span class="nt-item nt-tight d-flex align-items-center me-0"><svg width="16" height="14" viewBox="0 0 16 14"><path fill="#9dc0ea" stroke="#2c4a80" d="M.5 .5h7v6h-7zM8.500 .5h7v6h-7zM.5 7.500h7v6h-7zM8.500 7.500h7v6h-7z"/></svg><i class="tri"></i></span>
        </div>
        <svg class="warn-mark" width="16" height="14" viewBox="0 0 16 14"><path fill="#f8c01e" stroke="#333" stroke-linejoin="round" d="M8 1l7 12H1z"/><path fill="#333" d="M7.300 4.500h1.400v5H7.300zM7.300 10.300h1.400v1.500H7.300z"/></svg>
    </div>

    <div class="timeline d-flex align-items-center flex-shrink-0">
        <div class="tl-btns d-flex align-items-center">
            <svg width="12" height="13" viewBox="0 0 12 13" fill="#555"><path d="M0 0h2v13H0zM12 0v13L2 6.500z"/></svg>
            <svg width="13" height="13" viewBox="0 0 13 13" fill="#555"><path d="M10 0v13L0 6.500zM11 4.500h2v4h-2z"/></svg>
            <svg width="12" height="15" viewBox="0 0 12 15" fill="#555"><path d="M0 0l12 7.500L0 15z"/></svg>
            <svg width="13" height="13" viewBox="0 0 13 13" fill="#555"><path d="M3 0v13l10-6.500zM0 4.500h2v4H0z"/></svg>
            <svg width="12" height="13" viewBox="0 0 12 13" fill="#555"><path d="M10 0h2v13h-2zM0 0v13l10-6.500z"/></svg>
        </div>
        <div class="tl-stack">
            <div class="tl-items d-flex">
                <svg width="16" height="16"><use href="#i-sk-edit"/></svg>
                <svg width="16" height="16"><use href="#i-revolve"/></svg>
                <svg width="16" height="16"><use href="#i-sk-edit"/></svg>
                <svg width="16" height="16"><use href="#i-extrude"/></svg>
                <svg width="16" height="16"><use href="#i-sk-edit"/></svg>
                <svg width="16" height="16"><use href="#i-extrude"/></svg>
                <svg width="16" height="16"><use href="#i-sk-edit"/></svg>
                <svg width="16" height="16"><use href="#i-extrude"/></svg>
                <svg width="16" height="16"><use href="#i-sk-edit"/></svg>
                <svg width="16" height="16"><use href="#i-construct"/></svg>
                <svg width="16" height="16"><use href="#i-sk-edit"/></svg>
                <svg width="16" height="16"><use href="#i-revolve"/></svg>
                <svg width="16" height="16"><use href="#i-construct"/></svg>
            </div>
            <svg class="tl-ruler" width="290" height="7" viewBox="0 0 290 7">
                <path fill="none" stroke="#c9c9c9" stroke-width="2" d="M1 0v6h288V0M25 0v6M49 0v6M73 0v6M97 0v6M121 0v6M145 0v6M169 0v6M193 0v6M217 0v6M241 0v6M265 0v6"/>
            </svg>
        </div>
        <svg class="playhead" width="12" height="32" viewBox="0 0 12 32"><path fill="#555" d="M0 0h12l-4 8v24H5V8z"/></svg>
        <svg class="tl-gear" width="15" height="15"><use href="#i-gear"/></svg>
    </div>

    <script>
        // ground grid, two families of parallel lines through the model origin
        const grid = document.getElementById('grid');
        const ox = 684, oy = 508, slope = 0.575, step = 15, major = 5;
        let out = '';
        for (const dir of [1, -1]) {
            for (let k = -120; k <= 120; k++) {
                const y0 = oy + k * step - dir * slope * ox;
                const isMajor = k % major === 0;
                out += `<line x1="0" y1="${y0}" x2="1366" y2="${y0 + dir * slope * 1366}" stroke="${isMajor ? '#8c8c8c' : '#6b6b6b'}" stroke-width="${isMajor ? 1.1 : 0.9}"/>`;
            }
        }
        grid.innerHTML = out;
    </script>
    <script src="https://cdn.jsdelivr.net/npm/bootstrap@5.3.0/dist/js/bootstrap.bundle.min.js"></script>
</body>
</html>
